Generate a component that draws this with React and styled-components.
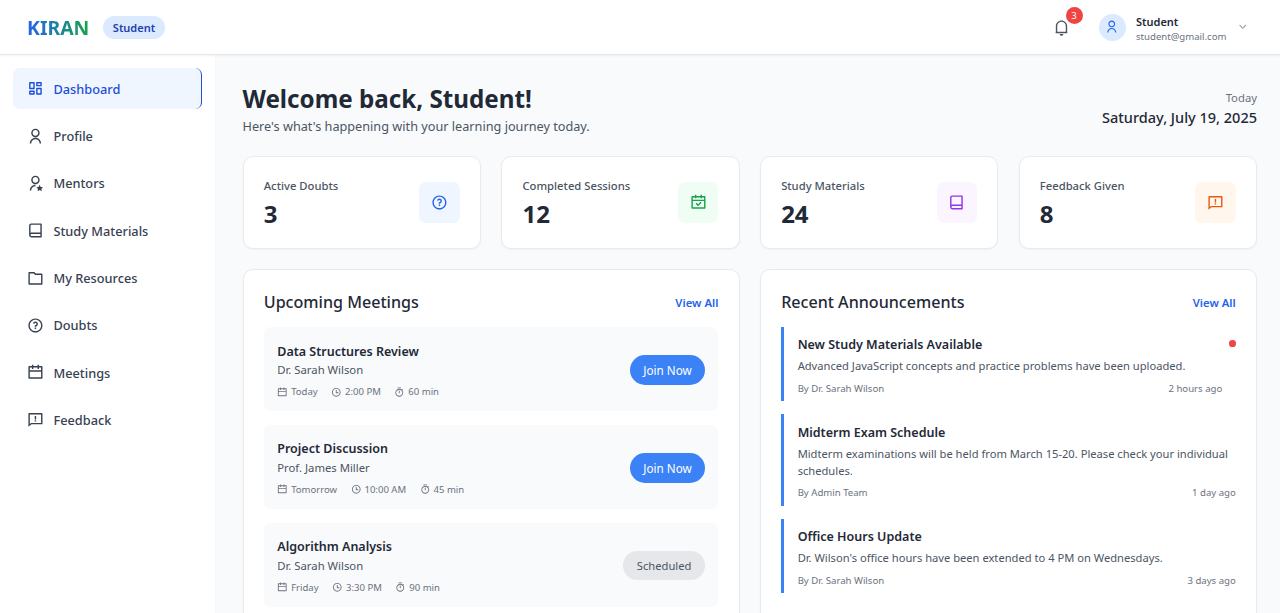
import React from 'react';
import styled, { createGlobalStyle } from 'styled-components';
import {
  RiDashboardLine, RiUserLine, RiUserStarLine, RiBookLine, RiFolderLine, RiQuestionLine,
  RiCalendarLine, RiFeedbackLine, RiNotification4Line, RiArrowDownSLine, RiCalendarCheckLine,
  RiTimeLine, RiTimerLine,
} from 'react-icons/ri';

const GlobalStyle = createGlobalStyle`
  html { font-size: 13.5px; }
  *, *::before, *::after { box-sizing: border-box; }
  body {
    margin: 0;
    height: 613px;
    overflow: hidden;
    background: #f9fafb;
    color: #1f2937;
    font-family: 'Segoe UI', 'Noto Sans', 'Open Sans', sans-serif;
  }
  h1, h2, h3, p { margin: 0; }
  button { font-family: inherit; border: 0; cursor: pointer; }
  svg { flex: none; display: block; }
`;

const Page = styled.div`
  height: 613px;
  display: flex;
  flex-direction: column;
  overflow: hidden;
`;

const Header = styled.header`
  flex: none;
  height: 55px;
  padding: 0 31px 0 27px;
  display: flex;
  align-items: center;
  justify-content: space-between;
  background: #fff;
  border-bottom: 1px solid #e5e7eb;
  box-shadow: 0 1px 2px rgba(0, 0, 0, 0.05);
  position: relative;
`;

const Brand = styled.div`
  display: flex;
  align-items: center;
  gap: 13.5px;
`;

const Logo = styled.span`
  font-size: 19.4px;
  line-height: 27px;
  font-weight: 700;
  background: linear-gradient(to right, #2563eb, #16a34a);
  -webkit-background-clip: text;
  background-clip: text;
  color: transparent;
`;

const RoleBadge = styled.span`
  padding: 1px 10px 0;
  border-radius: 12px;
  background: #dbeafe;
  color: #1e40af;
  font-size: 11px;
  line-height: 22px;
  font-weight: 600;
`;

const Account = styled.div`
  display: flex;
  align-items: center;
`;

const Bell = styled.div`
  position: relative;
  margin-right: 28.5px;
  color: #4b5563;
`;

const BellCount = styled.span`
  position: absolute;
  top: -12px;
  left: 12.5px;
  width: 17px;
  height: 17px;
  border-radius: 50%;
  background: #ef4444;
  color: #fff;
  font-size: 9.5px;
  line-height: 17px;
  text-align: center;
`;

const Avatar = styled.div`
  width: 27px;
  height: 27px;
  margin-right: 10.5px;
  border-radius: 50%;
  display: grid;
  place-items: center;
  background: #dbeafe;
  color: #2563eb;
`;

const AccountText = styled.div`
  width: 99.5px;
  padding-top: 3px;
`;

const AccountName = styled.p`
  font-size: 11px;
  line-height: 16px;
  font-weight: 600;
`;

const AccountMail = styled.p`
  font-size: 9.6px;
  line-height: 13.5px;
  color: #6b7280;
`;

const Body = styled.div`
  flex: 1;
  display: flex;
  min-height: 0;
`;

const Sidebar = styled.nav`
  flex: none;
  width: 216px;
  padding: 13.2px 13.5px 0 13px;
  display: flex;
  flex-direction: column;
  gap: 6.8px;
  background: #fff;
  border-right: 1px solid #f7f8fa;
`;

const NavItem = styled.a`
  flex: none;
  height: 40.5px;
  padding: 0.7px 14px 0 13.8px;
  display: flex;
  align-items: center;
  gap: 9.8px;
  border-radius: 6.75px;
  font-size: 12.75px;
  font-weight: 500;
  color: ${(p) => (p.$active ? '#1d4ed8' : '#374151')};
  background: ${(p) => (p.$active ? '#eff6ff' : 'transparent')};
  border-right: ${(p) => (p.$active ? '1px solid #1d4ed8' : '0')};
`;

const Main = styled.main`
  flex: 1;
  min-width: 0;
  padding: 27px 23px 0 26.5px;
  display: flex;
  flex-direction: column;
  gap: 20.25px;
`;

const Intro = styled.section`
  display: flex;
  align-items: center;
  justify-content: space-between;
`;

const Title = styled.h1`
  font-size: 24.2px;
  line-height: 33px;
  font-weight: 700;
`;

const Subtitle = styled.p`
  padding-top: 2px;
  font-size: 12.7px;
  line-height: 18.75px;
  color: #4b5563;
`;

const DateBlock = styled.div`
  text-align: right;
`;

const DateLabel = styled.p`
  font-size: 11.3px;
  line-height: 17px;
  color: #6b7280;
`;

const DateValue = styled.p`
  font-size: 14.5px;
  line-height: 23px;
  font-weight: 500;
`;

const Stats = styled.section`
  display: grid;
  grid-template-columns: repeat(4, 1fr);
  gap: 20.25px;
`;

const Card = styled.div`
  background: #fff;
  border: 1px solid #e8eaed;
  border-radius: 10px;
  padding: 20.25px;
  box-shadow: 0 1px 2px rgba(0, 0, 0, 0.04);
`;

const StatCard = styled(Card)`
  height: 92.6px;
  display: flex;
  align-items: center;
  justify-content: space-between;
`;

const StatLabel = styled.p`
  font-size: 11.25px;
  line-height: 17px;
  font-weight: 500;
  color: #4b5563;
`;

const StatValue = styled.p`
  margin-top: 4px;
  padding-top: 1px;
  font-size: 24px;
  line-height: 29.4px;
  font-weight: 700;
`;

const StatIcon = styled.div`
  width: 40.5px;
  height: 40.5px;
  border-radius: 6.75px;
  display: grid;
  place-items: center;
  color: ${(p) => p.$color};
  background: ${(p) => p.$tint};
`;

const Panels = styled.section`
  display: grid;
  grid-template-columns: 1fr 1fr;
  gap: 20.25px;
`;

const Panel = styled(Card)`
  height: 380px;
`;

const PanelHead = styled.div`
  display: flex;
  align-items: center;
  justify-content: space-between;
  margin-bottom: 13.2px;
`;

const PanelTitle = styled.h2`
  padding-top: 2px;
  font-size: 16.1px;
  line-height: 21.6px;
  font-weight: 500;
`;

const ViewAll = styled.a`
  padding-top: 1px;
  font-size: 11.3px;
  line-height: 17px;
  font-weight: 600;
  color: #2563eb;
`;

const List = styled.div`
  display: flex;
  flex-direction: column;
  gap: 13.5px;
`;

const MeetingRow = styled.div`
  padding: 14.4px 13.5px 12.6px;
  border-radius: 6.75px;
  background: #f9fafb;
  display: flex;
  align-items: center;
  justify-content: space-between;
`;

const ItemTitle = styled.h3`
  padding-top: 1.4px;
  font-size: 12.5px;
  line-height: 18.85px;
  font-weight: 600;
`;

const ItemText = styled.p`
  font-size: 11.2px;
  line-height: 16.9px;
  color: #4b5563;
`;

const Mentor = styled(ItemText)`
  font-size: 11.3px;
  padding-top: 0.6px;
`;

const MeetingMeta = styled.div`
  margin-top: 6.1px;
  display: flex;
  gap: 13.5px;
`;

const MetaItem = styled.span`
  display: flex;
  align-items: center;
  gap: 3.4px;
  font-size: 9.55px;
  line-height: 13.5px;
  color: #6b7280;
`;

const JoinButton = styled.button`
  height: 30px;
  padding: 0 13.2px;
  border-radius: 15px;
  background: #3b82f6;
  color: #fff;
  font-size: 11.7px;
`;

const ScheduledTag = styled.span`
  padding: 0 13.5px;
  border-radius: 15px;
  background: #e5e7eb;
  color: #4b5563;
  font-size: 11.2px;
  line-height: 29px;
`;

const Announcement = styled.article`
  padding: 7.65px 0 5.85px 13.5px;
  border-left: 3px solid #3b82f6;
  display: flex;
  align-items: flex-start;
`;

const AnnouncementBody = styled.div`
  flex: 1;
`;

const AnnouncementText = styled(ItemText)`
  margin-top: 3.4px;
  font-size: 11.17px;
`;

const AnnouncementMeta = styled.div`
  margin-top: 6.6px;
  display: flex;
  justify-content: space-between;
  font-size: 9.6px;
  line-height: 13.5px;
  color: #6b7280;
`;

const UnreadDot = styled.span`
  flex: none;
  width: 6.75px;
  height: 6.75px;
  margin: 5.85px 0 0 6.75px;
  border-radius: 50%;
  background: #ef4444;
`;

const navItems = [
  { label: 'Dashboard', icon: RiDashboardLine, active: true },
  { label: 'Profile', icon: RiUserLine },
  { label: 'Mentors', icon: RiUserStarLine },
  { label: 'Study Materials', icon: RiBookLine },
  { label: 'My Resources', icon: RiFolderLine },
  { label: 'Doubts', icon: RiQuestionLine },
  { label: 'Meetings', icon: RiCalendarLine },
  { label: 'Feedback', icon: RiFeedbackLine },
];

const stats = [
  { label: 'Active Doubts', value: 3, icon: RiQuestionLine, color: '#2563eb', tint: '#eff6ff' },
  { label: 'Completed Sessions', value: 12, icon: RiCalendarCheckLine, color: '#16a34a', tint: '#f0fdf4' },
  { label: 'Study Materials', value: 24, icon: RiBookLine, color: '#9333ea', tint: '#faf5ff' },
  { label: 'Feedback Given', value: 8, icon: RiFeedbackLine, color: '#ea580c', tint: '#fff7ed' },
];

const meetings = [
  { title: 'Data Structures Review', mentor: 'Dr. Sarah Wilson', day: 'Today', time: '2:00 PM', length: '60 min', open: true },
  { title: 'Project Discussion', mentor: 'Prof. James Miller', day: 'Tomorrow', time: '10:00 AM', length: '45 min', open: true },
  { title: 'Algorithm Analysis', mentor: 'Dr. Sarah Wilson', day: 'Friday', time: '3:30 PM', length: '90 min', open: false },
];

const announcements = [
  { title: 'New Study Materials Available', text: 'Advanced JavaScript concepts and practice problems have been uploaded.', by: 'By Dr. Sarah Wilson', when: '2 hours ago', unread: true },
  { title: 'Midterm Exam Schedule', text: 'Midterm examinations will be held from March 15-20. Please check your individual schedules.', by: 'By Admin Team', when: '1 day ago' },
  { title: 'Office Hours Update', text: "Dr. Wilson's office hours have been extended to 4 PM on Wednesdays.", by: 'By Dr. Sarah Wilson', when: '3 days ago' },
];

export default function App() {
  return (
    <Page>
      <GlobalStyle />
      <Header>
        <Brand>
          <Logo>KIRAN</Logo>
          <RoleBadge>Student</RoleBadge>
        </Brand>
        <Account>
          <Bell>
            <RiNotification4Line size={17} />
            <BellCount>3</BellCount>
          </Bell>
          <Avatar><RiUserLine size={13.5} /></Avatar>
          <AccountText>
            <AccountName>Student</AccountName>
            <AccountMail>student@gmail.com</AccountMail>
          </AccountText>
          <RiArrowDownSLine size={13.5} color="#9ca3af" />
        </Account>
      </Header>
      <Body>
        <Sidebar>
          {navItems.map(({ label, icon: Icon, active }) => (
            <NavItem key={label} $active={active}>
              <Icon size={16.875} />
              {label}
            </NavItem>
          ))}
        </Sidebar>
        <Main>
          <Intro>
            <div>
              <Title>Welcome back, Student!</Title>
              <Subtitle>Here's what's happening with your learning journey today.</Subtitle>
            </div>
            <DateBlock>
              <DateLabel>Today</DateLabel>
              <DateValue>Saturday, July 19, 2025</DateValue>
            </DateBlock>
          </Intro>
          <Stats>
            {stats.map(({ label, value, icon: Icon, color, tint }) => (
              <StatCard key={label}>
                <div>
                  <StatLabel>{label}</StatLabel>
                  <StatValue>{value}</StatValue>
                </div>
                <StatIcon $color={color} $tint={tint}><Icon size={16.875} /></StatIcon>
              </StatCard>
            ))}
          </Stats>
          <Panels>
            <Panel>
              <PanelHead>
                <PanelTitle>Upcoming Meetings</PanelTitle>
                <ViewAll>View All</ViewAll>
              </PanelHead>
              <List>
                {meetings.map((m) => (
                  <MeetingRow key={m.title}>
                    <div>
                      <ItemTitle>{m.title}</ItemTitle>
                      <Mentor>{m.mentor}</Mentor>
                      <MeetingMeta>
                        <MetaItem><RiCalendarLine size={10.5} />{m.day}</MetaItem>
                        <MetaItem><RiTimeLine size={10.5} />{m.time}</MetaItem>
                        <MetaItem><RiTimerLine size={10.5} />{m.length}</MetaItem>
                      </MeetingMeta>
                    </div>
                    {m.open ? <JoinButton>Join Now</JoinButton> : <ScheduledTag>Scheduled</ScheduledTag>}
                  </MeetingRow>
                ))}
              </List>
            </Panel>
            <Panel>
              <PanelHead>
                <PanelTitle>Recent Announcements</PanelTitle>
                <ViewAll>View All</ViewAll>
              </PanelHead>
              <List>
                {announcements.map((a) => (
                  <Announcement key={a.title}>
                    <AnnouncementBody>
                      <ItemTitle>{a.title}</ItemTitle>
                      <AnnouncementText>{a.text}</AnnouncementText>
                      <AnnouncementMeta>
                        <span>{a.by}</span>
                        <span>{a.when}</span>
                      </AnnouncementMeta>
                    </AnnouncementBody>
                    {a.unread && <UnreadDot />}
                  </Announcement>
                ))}
              </List>
            </Panel>
          </Panels>
        </Main>
      </Body>
    </Page>
  );
}
